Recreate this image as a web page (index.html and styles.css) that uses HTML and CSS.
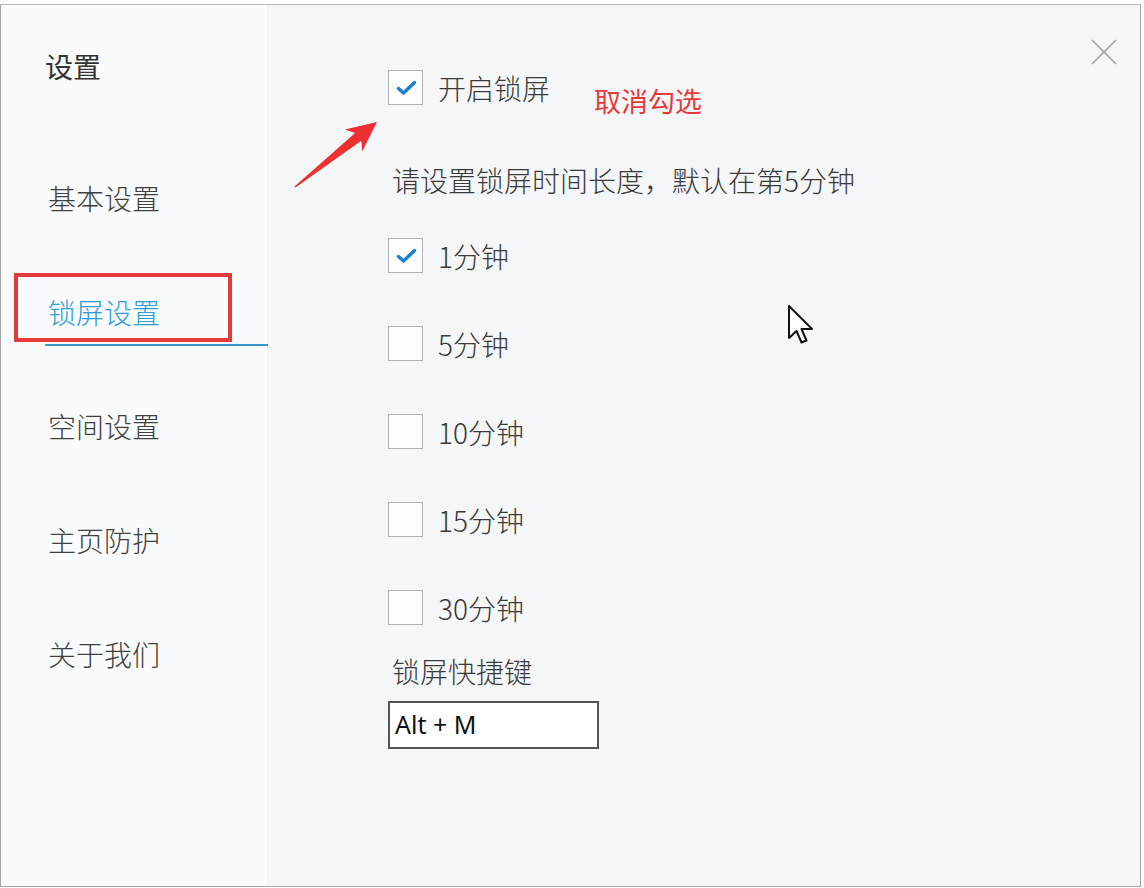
FILE: index.html
```html
<!DOCTYPE html>
<html lang="zh-CN">
<head>
<meta charset="utf-8">
<title>设置</title>
<link rel="stylesheet" href="styles.css">
</head>
<body>
<div class="frame">
  <aside class="sidebar">
    <div class="title">设置</div>
    <nav class="nav">
      <div class="nav-item">基本设置</div>
      <div class="nav-item active">锁屏设置</div>
      <div class="nav-item">空间设置</div>
      <div class="nav-item">主页防护</div>
      <div class="nav-item">关于我们</div>
    </nav>
    <div class="highlight-box"></div>
  </aside>
  <main class="main">
    <div class="row first">
      <span class="box checked"><svg viewBox="0 0 35 35" width="35" height="35"><path d="M10.5 18.5 L15.5 23 L26.5 12.5" fill="none" stroke="#1c7fd2" stroke-width="3.4" stroke-linecap="round" stroke-linejoin="round"/></svg></span>
      <span class="label">开启锁屏</span>
      <span class="note">取消勾选</span>
    </div>
    <div class="desc">请设置锁屏时间长度，默认在第5分钟</div>
    <div class="options">
      <div class="row">
        <span class="box checked"><svg viewBox="0 0 35 35" width="35" height="35"><path d="M10.5 18.5 L15.5 23 L26.5 12.5" fill="none" stroke="#1c7fd2" stroke-width="3.4" stroke-linecap="round" stroke-linejoin="round"/></svg></span>
        <span class="label">1分钟</span>
      </div>
      <div class="row"><span class="box"></span><span class="label">5分钟</span></div>
      <div class="row"><span class="box"></span><span class="label">10分钟</span></div>
      <div class="row"><span class="box"></span><span class="label">15分钟</span></div>
      <div class="row"><span class="box"></span><span class="label">30分钟</span></div>
    </div>
    <div class="hotkey-label">锁屏快捷键</div>
    <div class="hotkey-input">Alt + M</div>

    <svg class="close" viewBox="0 0 26 26" width="26" height="26"><path d="M1 1 L25 25 M25 1 L1 25" stroke="#9a9a9a" stroke-width="1.4" fill="none"/></svg>
    <svg class="arrow" viewBox="288 115 95 80" width="95" height="80"><polygon points="294.5,186.4 355.1,133 344.8,129.6 377,122 362.2,151.6 361.3,140.8 295.5,187.6" fill="#ee2f2f"/></svg>
    <svg class="cursor" viewBox="0 0 28 42" width="28" height="42"><path d="M2 2 L2 34 L9.5 27 L14.5 38.5 L19.5 36.5 L14.5 25 L25 25 Z" fill="#fff" stroke="#111" stroke-width="2" stroke-linejoin="round"/></svg>
  </main>
</div>
</body>
</html>
```

FILE: styles.css
```css
html, body {
  margin: 0;
  padding: 0;
  background: #ffffff;
}

body {
  font-family: "Noto Sans CJK SC", "Noto Sans", sans-serif;
  font-weight: 300;
  color: #3a3a3a;
}

.frame {
  margin-top: 4px;
  width: 1139px;
  height: 881px;
  border: 1px solid #a6a6a6;
  border-top-color: #b8b8b8;
  display: flex;
  background: #f5f6f8;
}

.sidebar {
  position: relative;
  width: 267px;
  flex: none;
  background: #fafbfc;
  border-right: 1px solid #f0f1f3;
  box-sizing: border-box;
  padding-top: 41px;
}

.title {
  padding-left: 44px;
  font-size: 28px;
  line-height: 40px;
  height: 40px;
  font-weight: 400;
  color: #333;
}

.nav {
  margin-top: 92px;
  display: flex;
  flex-direction: column;
  gap: 60px;
}

.nav-item {
  margin-left: 44px;
  padding-left: 3px;
  font-size: 28px;
  line-height: 40px;
  height: 40px;
  padding-bottom: 12px;
  border-bottom: 2px solid transparent;
  color: #3f3f3f;
}

.nav-item.active {
  color: #2f9cd8;
  border-bottom-color: #3a98cf;
  margin-right: -1px;
}

.highlight-box {
  position: absolute;
  left: 13px;
  top: 268px;
  width: 218px;
  height: 69px;
  box-sizing: border-box;
  border: 4px solid #e5393b;
}

.main {
  position: relative;
  flex: 1;
  padding-top: 65px;
  padding-left: 120px;
  display: flex;
  flex-direction: column;
  align-items: flex-start;
}

.row {
  display: flex;
  align-items: center;
  height: 35px;
}

.box {
  width: 35px;
  height: 35px;
  box-sizing: border-box;
  border: 1px solid #b4b4b4;
  background: #fdfdfd;
  display: block;
  position: relative;
}

.box svg {
  position: absolute;
  left: -1px;
  top: -1px;
}

.label {
  margin-left: 15px;
  font-size: 28px;
  line-height: 36px;
}

.note {
  margin-left: 44px;
  margin-top: 26px;
  font-size: 27px;
  line-height: 36px;
  font-weight: 400;
  color: #e33b3b;
}

.desc {
  margin-top: 57px;
  margin-left: 4px;
  font-size: 28px;
  line-height: 36px;
  height: 36px;
}

.options {
  margin-top: 40px;
  display: flex;
  flex-direction: column;
  gap: 53px;
}

.hotkey-label {
  margin-top: 28px;
  margin-left: 4px;
  font-size: 28px;
  line-height: 36px;
  height: 36px;
}

.hotkey-input {
  margin-top: 12px;
  width: 211px;
  height: 48px;
  box-sizing: border-box;
  border: 2px solid #555;
  background: #fff;
  padding-left: 5px;
  font-family: "Noto Sans", sans-serif;
  font-weight: 400;
  font-size: 25px;
  line-height: 43px;
  color: #111;
}

.close {
  position: absolute;
  left: 823px;
  top: 34px;
}

.arrow {
  position: absolute;
  left: 20px;
  top: 110px;
}

.cursor {
  position: absolute;
  left: 519px;
  top: 299px;
}
```
